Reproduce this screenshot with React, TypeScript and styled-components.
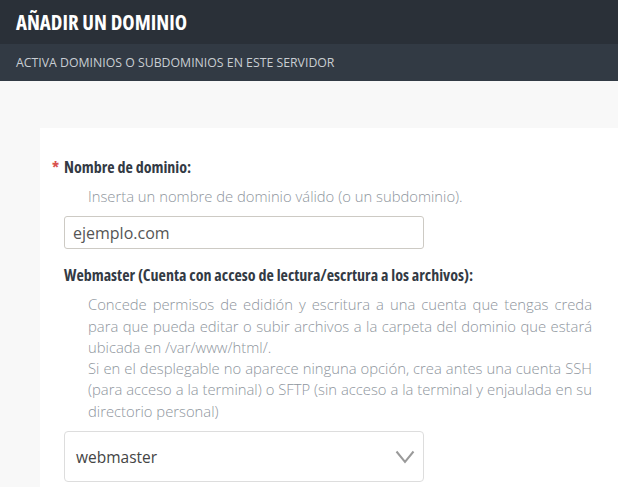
import styled, { createGlobalStyle } from 'styled-components';

const GlobalStyle = createGlobalStyle`
  html, body {
    margin: 0;
    padding: 0;
    background: #f8f8f8;
    font-family: "Open Sans", "Liberation Sans", sans-serif;
  }
  * {
    box-sizing: border-box;
  }
`;

const App = () => {
  return (
    <Page>
      <GlobalStyle />
      <TitleBar>
        <Title>AÑADIR UN DOMINIO</Title>
      </TitleBar>
      <SubBar>ACTIVA DOMINIOS O SUBDOMINIOS EN ESTE SERVIDOR</SubBar>

      <Content>
        <Card>
          <Field>
            <Label required>Nombre de dominio:</Label>
            <Help>Inserta un nombre de dominio válido (o un subdominio).</Help>
            <TextInput defaultValue="ejemplo.com" />
          </Field>

          <Field>
            <Label>Webmaster (Cuenta con acceso de lectura/escrtura a los archivos):</Label>
            <Help>
              Concede permisos de edidión y escritura a una cuenta que tengas creda para que
              pueda editar o subir archivos a la carpeta del dominio que estará ubicada en
              /var/www/html/.
              <br />
              Si en el desplegable no aparece ninguna opción, crea antes una cuenta SSH (para
              acceso a la terminal) o SFTP (sin acceso a la terminal y enjaulada en su
              directorio personal)
            </Help>
            <SelectBox>
              <span>webmaster</span>
              <svg width="20" height="14" viewBox="0 0 20 14" fill="none">
                <path d="M1.5 1.5 L10 12 L18.5 1.5" stroke="#9a9a9a" strokeWidth="2" />
              </svg>
            </SelectBox>
          </Field>
        </Card>
      </Content>
    </Page>
  );
};

export default App;

/* ---------------- styled-components ---------------- */

const Page = styled.div`
  min-height: 487px;
  overflow: hidden;
`;

const TitleBar = styled.header`
  height: 44px;
  background: #2a3038;
  display: flex;
  align-items: center;
  padding: 0 16px;
`;

const Title = styled.h1`
  margin: 0;
  font-family: "Open Sans", "Liberation Sans Narrow", sans-serif;
  font-stretch: 75%;
  font-size: 20.8px;
  font-weight: 700;
  color: #fff;
`;

const SubBar = styled.div`
  height: 37px;
  background: #323a44;
  display: flex;
  align-items: center;
  padding: 0 16px;
  font-size: 12.3px;
  font-weight: 400;
  color: #c9ced3;
`;

const Content = styled.main`
  padding: 47px 0 0 40px;
`;

const Card = styled.section`
  background: #fff;
  padding: 28px 26px 4px 12px;
  min-height: 360px;
`;

const Field = styled.div`
  & + & {
    margin-top: 15px;
  }
`;

const Label = styled.h2<{ required?: boolean }>`
  margin: 0 0 8px;
  padding-left: 12px;
  position: relative;
  font-family: "Open Sans", "Liberation Sans Narrow", sans-serif;
  font-stretch: 75%;
  font-size: 16px;
  line-height: 22px;
  font-weight: 700;
  color: #333a44;

  &::before {
    content: ${({ required }) => (required ? "'*'" : "none")};
    position: absolute;
    left: 0;
    top: 0;
    color: #d9534f;
  }
`;

const Help = styled.p`
  margin: 0 0 9px;
  padding-left: 36px;
  font-size: 14.8px;
  font-weight: 300;
  line-height: 21.3px;
  color: #8e959d;
  text-align: justify;
`;

const TextInput = styled.input`
  display: block;
  margin-left: 12px;
  width: 360px;
  height: 33px;
  padding: 0 8px;
  border: 1px solid #cdcac4;
  border-radius: 3px;
  font-family: "Open Sans", sans-serif;
  font-size: 16px;
  font-weight: 400;
  color: #555;
  outline: none;
`;

const SelectBox = styled.div`
  margin-left: 12px;
  margin-top: 0;
  width: 360px;
  height: 51px;
  padding: 0 8px 0 11px;
  border: 1px solid #ddd;
  border-radius: 4px;
  display: flex;
  align-items: center;
  justify-content: space-between;
  font-size: 15.5px;
  color: #444;
`;
